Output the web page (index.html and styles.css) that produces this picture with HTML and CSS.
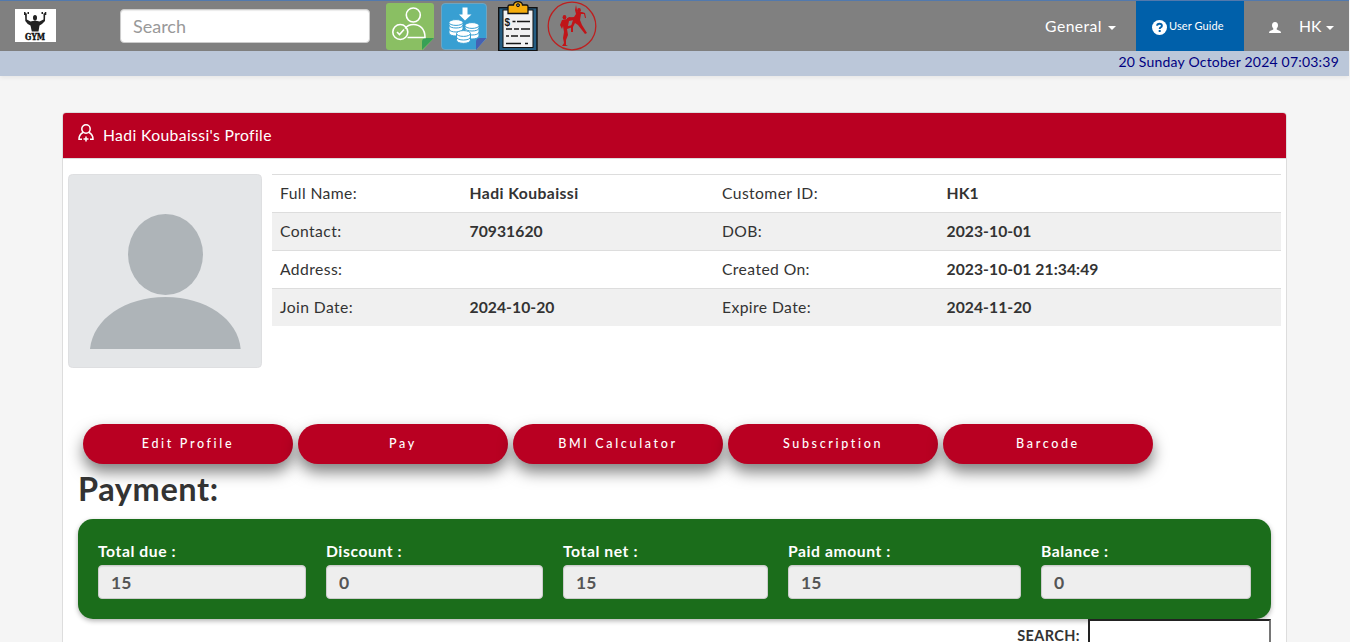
FILE: index.html
```
<!DOCTYPE html>
<html lang="en">
<head>
<meta charset="utf-8">
<title>Gym Profile</title>
<link rel="stylesheet" href="styles.css">
</head>
<body>
<header class="navbar">
  <svg class="logo" width="41" height="33" viewBox="0 0 41 33">
    <rect width="41" height="33" fill="#fff"/>
    <g fill="#222">
      <ellipse cx="20" cy="8.800" rx="2" ry="2.800"/>
      <path d="M10 4L11.800 4.500L11.800 10.500L15.500 12.500Q20 10.800 24.500 12.500L28.500 10.500L28.500 4.500L30.200 4L30 12Q27.500 15 24.500 16.500L23.500 22.500H16.800L15.500 16.500Q12 15 10.300 12Z"/>
      <path d="M9 3h1.500v3H9zM12.500 3H14v2h-1.500zM26.500 3H28v2h-1.500zM29.800 3h1.500v3h-1.500z"/>
    </g>
    <text class="logo-text" x="20" y="31.200" text-anchor="middle" textLength="20" lengthAdjust="spacingAndGlyphs">GYM</text>
  </svg>
  <input class="nav-search" placeholder="Search">
  <div class="shortcuts">
    <svg class="ic-member" width="49" height="48" viewBox="0 0 49 48">
      <path d="M3 0H45Q48 0 48 3V35L37 47H3Q0 47 0 44V3Q0 0 3 0Z" fill="#8abf63"/>
      <path d="M36 47V39Q36 35 40 35H48Z" fill="#37a055"/>
      <g fill="none" stroke="#fff" stroke-width="1.600">
        <circle cx="27.300" cy="12" r="7"/>
        <path d="M19 25.500Q22 21.500 27.500 21.500C34 21.500 39 26 39 34.500H21.500"/>
        <circle cx="14.300" cy="29" r="7.500"/>
        <path d="M11 29l2.500 2.500 4.500-5"/>
      </g>
    </svg>
    <svg class="ic-coins" width="47" height="48" viewBox="0 0 47 48">
      <path d="M4 .500H42Q45.500 .500 45.500 4V35L35 46.500H4Q.500 46.500 .500 43V4Q.500 .500 4 .500Z" fill="#389fd2" stroke="#73a9c6" stroke-width=".8"/>
      <path d="M35 47V39Q35 35 39 35H45.500Z" fill="#4660b2"/>
      <path d="M21.500 4.500h5v7h4L24 17.500 18 11.500h3.500z" fill="#fff"/>
      <g fill="#fff" stroke="#389fd2" stroke-width="1">
        <path d="M8 19v11c0 4 14 4 14 0V19z"/><path d="M8 22c0 4 14 4 14 0M8 26c0 4 14 4 14 0" fill="none"/><ellipse cx="15" cy="19.500" rx="7" ry="2.900"/>
        <path d="M24 22v11c0 4 14 4 14 0V22z"/><path d="M24 25c0 4 14 4 14 0M24 29c0 4 14 4 14 0" fill="none"/><ellipse cx="31" cy="22.500" rx="7" ry="2.900"/>
        <path d="M15.500 31v6c0 4.500 14 4.500 14 0v-6z"/><path d="M15.500 34c0 4 14 4 14 0" fill="none"/><ellipse cx="22.500" cy="30.500" rx="7" ry="2.900"/>
      </g>
    </svg>
    <svg class="ic-invoice" width="40" height="50" viewBox="0 0 40 50">
      <rect x=".7" y="6.700" width="38.300" height="43" fill="#255d82" stroke="#111" stroke-width="1.400"/>
      <rect x="5" y="9" width="30" height="37.500" fill="#f1f1f2" stroke="#111"/>
      <path d="M10 12.500V5.500Q10 4 11.500 4H15.500Q16 .700 20 .700T24.500 4H28.500Q30 4 30 5.500V12.500Z" fill="#f5ad0c" stroke="#111" stroke-width="1.300"/>
      <circle cx="20" cy="4.200" r="1.500" fill="#777" stroke="#111"/>
      <text class="invoice-sign" x="6.500" y="24.500">$</text>
      <path d="M14.500 20.500h3M19 20.500h13M8 28h6M16 28h5M23 28h9M8 35h3M13 35h7M22 35h10M8 42.500h15M27 42.500h3" stroke="#171717" stroke-width="1.300"/>
    </svg>
    <svg class="ic-fighter" width="50" height="50" viewBox="0 0 50 50">
      <circle cx="25" cy="25" r="23.800" fill="none" stroke="#bd2020" stroke-width="1.300"/>
      <g fill="#c01519">
        <ellipse cx="17.500" cy="16.300" rx="1.900" ry="2.300"/>
        <path d="M15 19l5-1 2-2 5 1 0 2-5 1-1 5 5-1 0 2-6 2 1 6-2 5 0 5 2 1-6 0 2-3-1-5 1-6-1-6-1 3-2-4Z"/>
        <ellipse cx="32" cy="9.300" rx="1.900" ry="2.200"/>
        <path d="M29 13l-1-4 1-5 1 5 1 2 4 0 3 1 1 5-1 0-1-4-3 0-1 6 2 5 5 8-2 1-7-9-3-2-2 4 0 5-2 0 0-6 2-6-6 0 0-2 7-1Z"/>
      </g>
    </svg>
  </div>
  <nav class="nav-right">
    <a class="nav-general">General<i class="caret"></i></a>
    <a class="nav-guide">
      <svg width="15" height="15" viewBox="0 0 15 15"><circle cx="7.500" cy="7.500" r="7.500" fill="#fff"/><path d="M5.100 5.800Q5.100 3.700 7.500 3.700T9.900 5.700Q9.900 6.900 8.700 7.400Q7.700 7.900 7.700 9" fill="none" stroke="#0060aa" stroke-width="1.900"/><path d="M6.700 10h2v2h-2z" fill="#0060aa"/></svg>
      <span class="guide-text">User Guide</span>
    </a>
    <a class="nav-user">
      <svg width="12" height="11" viewBox="0 0 12 11"><path d="M6 0C8 0 9 1.300 9 3.200C9 5 8.200 5.700 7.700 6.500V7.500L11 9Q12 9.600 12 11H0Q0 9.600 1 9L4.300 7.500V6.500C3.800 5.700 3 5 3 3.200C3 1.300 4 0 6 0Z" fill="#fff"/></svg>
      <span class="user-text">HK</span><i class="caret"></i>
    </a>
  </nav>
</header>
<div class="datebar"><span class="date-text">20 Sunday October 2024 07:03:39</span></div>

<main class="panel">
  <div class="panel-head">
    <svg width="17" height="18" viewBox="0 0 17 18" fill="none" stroke="#fff" stroke-width="1.500"><circle cx="8" cy="5" r="4.200"/><path d="M5 8.500Q1 10.500 1 15.300H4M11 8.500Q15 10.500 15 15.300H12"/><path d="M8 12.500V17.500M5.500 15H10.500"/></svg>
    <span class="head-text">Hadi Koubaissi's Profile</span>
  </div>
  <div class="profile">
    <svg class="avatar" width="194" height="194" viewBox="0 0 194 194">
      <rect x=".500" y=".500" width="193" height="193" rx="4" fill="#e4e6e8" stroke="#dedfe1"/>
      <ellipse cx="97.500" cy="80.500" rx="37.500" ry="40.500" fill="#aeb4b8"/>
      <path d="M22 175C25 145 57 123 97.500 123S170 145 172.700 175Z" fill="#aeb4b8"/>
    </svg>
    <div class="details">
      <div class="row"><span>Full Name:</span><b class="name">Hadi Koubaissi</b><span>Customer ID:</span><b>HK1</b></div>
      <div class="row"><span>Contact:</span><b>70931620</b><span>DOB:</span><b>2023-10-01</b></div>
      <div class="row"><span>Address:</span><b></b><span>Created On:</span><b>2023-10-01 21:34:49</b></div>
      <div class="row"><span>Join Date:</span><b>2024-10-20</b><span>Expire Date:</span><b>2024-11-20</b></div>
    </div>
  </div>
  <div class="actions">
    <button class="btn">Edit Profile</button>
    <button class="btn">Pay</button>
    <button class="btn">BMI Calculator</button>
    <button class="btn">Subscription</button>
    <button class="btn">Barcode</button>
  </div>
  <h2 class="payment-title"><span>Payment:</span></h2>
  <section class="summary">
    <label><span>Total due :</span><input value="15" readonly></label>
    <label><span>Discount :</span><input value="0" readonly></label>
    <label><span>Total net :</span><input value="15" readonly></label>
    <label><span>Paid amount :</span><input value="15" readonly></label>
    <label><span>Balance :</span><input value="0" readonly></label>
  </section>
  <div class="table-search"><span>SEARCH:</span><input></div>
</main>
</body>
</html>
```
FILE: styles.css
```
* { box-sizing: border-box; }
html { overflow: hidden; }
body { margin: 0; height: 642px; overflow: hidden; background: #f5f5f5; color: #333; font: 15.7px/20px Lato, "Liberation Sans", sans-serif; }
svg { display: block; flex: none; }
input { font-family: inherit; outline: 0; }

.navbar { display: flex; align-items: flex-start; width: 1349px; height: 51px; background: #808080; border-top: 1px solid #5279ad; }
.logo { margin: 8px 0 0 15px; }
.logo-text { font: bold 9px "DejaVu Serif", serif; fill: #111; stroke: #111; stroke-width: .4px; }
.nav-search { width: 250px; height: 34px; margin: 8px 0 0 64px; padding: 0 12px; border: 1px solid #ccc; border-radius: 4px; background: #fff; box-shadow: inset 0 1px 1px rgba(0,0,0,.08); font-size: 18px; }
.nav-search::placeholder { color: #999; opacity: 1; }
.shortcuts { display: flex; margin-left: 16px; }
.ic-member { margin-top: 2px; }
.ic-coins { margin: 2px 0 0 6px; }
.ic-invoice { margin-left: 10px; }
.ic-fighter { margin-left: 9px; }
.invoice-sign { font: bold 10px "Liberation Sans", sans-serif; fill: #171717; }

.nav-right { display: flex; margin-left: auto; height: 50px; color: #fff; }
.nav-right a { display: flex; align-items: center; }
.nav-general { padding: 0 20px 0 0; letter-spacing: .45px; }
.caret { margin-left: 6px; margin-top: 3px; border: 4px solid transparent; border-top-color: #fff; border-bottom: 0; }
.nav-guide { width: 108px; padding-left: 16px; background: #0060aa; }
.nav-guide svg { margin-top: 2px; }
.guide-text { margin-left: 2px; font-size: 11px; letter-spacing: .1px; }
.nav-user { width: 105px; padding-left: 25px; }
.nav-user svg { margin-top: 3px; }
.user-text { margin-left: 18px; }
.nav-user .caret { margin-left: 5px; }

.datebar { width: 1349px; height: 25px; padding: 1px 10px 0 0; background: #bbc7d9; box-shadow: 0 2px 4px rgba(0,0,0,.06); color: #000080; font-size: 14px; letter-spacing: .21px; text-align: right; }

.panel { width: 1225px; height: 560px; margin: 36px 0 0 62px; border: 1px solid #ddd; border-radius: 4px; background: #fff; }
.panel-head { display: flex; height: 45px; padding: 11px 0 0 15px; border-radius: 3px 3px 0 0; background: #b90022; color: #fff; }
.head-text { margin: 1px 0 0 8px; letter-spacing: .38px; }
.profile { display: flex; height: 250px; padding: 15px 5px 0 5px; border-top: 1px solid #ddd; }
.details { width: 1009px; margin-left: 10px; }
.row { display: grid; grid-template-columns: 189.500px 252.500px 224.500px 1fr; height: 38px; padding: 8px 0 0 8px; border-top: 1px solid #ddd; }
.row span { letter-spacing: .4px; }
.row b { letter-spacing: .05px; }
.row .name { letter-spacing: .42px; }
.row:nth-child(even) { background: #f0f0f0; }
.actions { display: flex; gap: 5px; margin: 16px 0 0 20px; }
.btn { width: 210px; height: 40px; padding: 0 0 2px; border: 0; border-radius: 20px; background: #b90022; box-shadow: 0 8px 15px rgba(0,0,0,.5); color: #fff; font: 500 12.5px Lato, sans-serif; letter-spacing: 2.650px; }
.payment-title { margin: 5px 0 0 15px; font-size: 32.500px; line-height: 40px; height: 50px; letter-spacing: .6px; position: relative; }
.summary { display: grid; grid-template-columns: 208px 217px 205px 233px 210px; gap: 20px; width: 1193px; height: 100px; margin-left: 15px; padding: 22px 20px 0; border-radius: 15px; background: #1b6d1b; box-shadow: 0 2px 5px rgba(0,0,0,.3); color: #fff; font-weight: 700; }
.summary span { display: block; height: 24px; line-height: 21px; letter-spacing: .57px; }
.summary input { display: block; width: 100%; height: 34px; padding: 1px 12px 0; border: 1px solid #ccc; border-radius: 4px; background: #eee; box-shadow: inset 0 1px 1px rgba(0,0,0,.075); color: #555; font-size: 17.5px; font-weight: 700; }
.table-search { display: flex; justify-content: flex-end; margin-right: 15px; font-weight: 700; font-size: 14.500px; letter-spacing: .4px; position: relative; }
.table-search span { margin: 7px 8px 0 0; }
.table-search input { width: 183px; height: 36px; border: 2px solid; border-color: #222 #767676 #767676 #222; background: #fff; }
```
